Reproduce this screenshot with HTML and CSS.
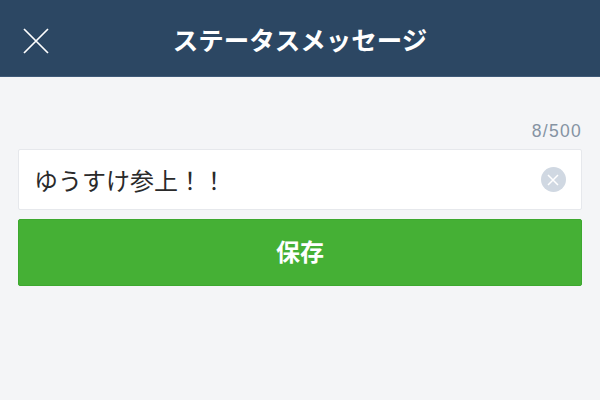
FILE: index.html
```html
<!DOCTYPE html>
<html lang="ja">
<head>
<meta charset="utf-8">
<title>ステータスメッセージ</title>
<link rel="stylesheet" href="styles.css">
</head>
<body>
<header class="nav">
  <svg class="nav-close" width="26" height="26" viewBox="0 0 26 26"><path d="M1 1 L25 25 M25 1 L1 25" stroke="#fff" stroke-width="1.7" fill="none"/></svg>
  <h1 class="nav-title">ステータスメッセージ</h1>
</header>
<main class="content">
  <div class="counter">8/500</div>
  <div class="field">
    <span class="field-text">ゆうすけ参上！！</span>
    <span class="clear"><svg width="12" height="12" viewBox="0 0 12 12"><path d="M1 1 L11 11 M11 1 L1 11" stroke="#fff" stroke-width="1.5" fill="none"/></svg></span>
  </div>
  <button class="save">保存</button>
</main>
</body>
</html>
```
FILE: styles.css
```css
* { box-sizing: border-box; }
html, body { margin: 0; height: 100%; }
body {
  width: 600px;
  height: 400px;
  overflow: hidden;
  background: #f4f5f7;
  font-family: "Noto Sans CJK JP", "Noto Sans", sans-serif;
}
.nav {
  height: 77px;
  background: #2c4763;
  border-bottom: 1px solid #3f5a78;
  display: flex;
  align-items: center;
  justify-content: center;
  position: relative;
}
.nav-close { position: absolute; left: 23px; top: 28px; }
.nav-title {
  margin: 0;
  color: #fff;
  font-size: 25.5px;
  font-weight: 700;
  line-height: 1;
  position: relative;
  top: 1px;
}
.content { padding: 43px 18px 0; }
.counter {
  text-align: right;
  color: #8593a3;
  font-size: 17.5px;
  line-height: 20px;
  font-family: "Liberation Sans", sans-serif;
  letter-spacing: 1.3px;
  margin-bottom: 9px;
  padding-top: 1px;
  height: 20px;
}
.field {
  height: 61px;
  background: #fff;
  border: 1px solid #e6e8ec;
  border-radius: 2px;
  display: flex;
  align-items: center;
  justify-content: space-between;
  padding: 0 15.5px 0 15px;
}
.field-text { font-size: 24px; font-weight: 400; color: #2a2a2a; line-height: 1; }
.clear {
  width: 25px;
  height: 25px;
  border-radius: 50%;
  background: #d0d8e2;
  display: flex;
  align-items: center;
  justify-content: center;
}
.save {
  display: block;
  width: 100%;
  height: 67px;
  margin-top: 9px;
  background: #45b035;
  border: 1px solid #3da82f;
  border-radius: 2px;
  color: #fff;
  font-family: inherit;
  font-size: 24px;
  font-weight: 700;
  line-height: 1;
  padding: 0 0 4px;
}
```
